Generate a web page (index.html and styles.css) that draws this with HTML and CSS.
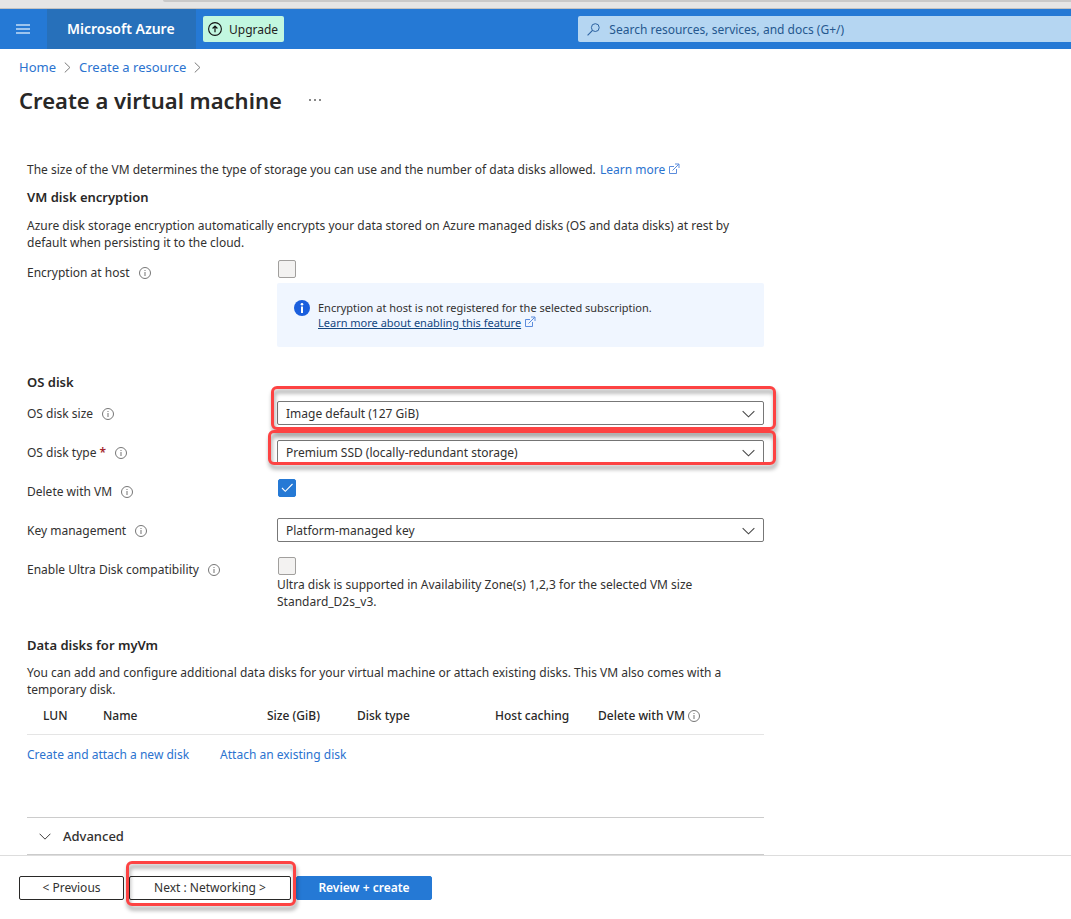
FILE: index.html
```html
<!DOCTYPE html>
<html lang="en">
<head>
<meta charset="utf-8">
<meta name="viewport" content="width=device-width, initial-scale=1">
<title>Create a virtual machine - Microsoft Azure</title>
<link rel="stylesheet" href="styles.css">
</head>
<body>
<svg class="sprite" aria-hidden="true">
  <symbol id="info" viewBox="0 0 12 12"><circle cx="6" cy="6" r="5.5" fill="none" stroke="#767676"/><path d="M6 5v4M6 3v1" stroke="#8a8a8a" stroke-width="1.2"/></symbol>
  <symbol id="chevron" viewBox="0 0 14 8"><path d="M.7 .8L7 7.1L13.3 .8" fill="none" stroke="currentColor" stroke-width="1.1"/></symbol>
  <symbol id="crumb" viewBox="0 0 6 10"><path d="M.5 .5L5.2 5L.5 9.5" fill="none" stroke="currentColor" stroke-width=".9"/></symbol>
  <symbol id="external" viewBox="0 0 12 12"><path d="M6 3.5H1.5V10.500H8.500V6M4.500 7.500L10.800 1.200M7 1H11V5" fill="none" stroke="currentColor"/></symbol>
</svg>

<div class="browser-edge"><div class="browser-bar"></div></div>

<header class="topbar">
  <div class="topbar-left">
    <button class="menu" type="button" aria-label="Show portal menu"><span class="bars"></span></button>
    <a class="brand" href="#">Microsoft Azure</a>
    <button class="upgrade" type="button">
      <svg width="14" height="14" viewBox="0 0 14 14" aria-hidden="true"><circle cx="7" cy="7" r="6.4" fill="none" stroke="#111" stroke-width="1.1"/><path d="M7 10.200V4.200M4.600 6.500L7 4.100L9.400 6.500" fill="none" stroke="#111" stroke-width="1.2"/></svg>
      Upgrade
    </button>
  </div>
  <div class="search">
    <svg width="13" height="13" viewBox="0 0 13 13" aria-hidden="true"><circle cx="8.300" cy="4.600" r="3.900" fill="none" stroke="#2c62a0"/><path d="M5.500 7.400L.6 12.300" stroke="#2c62a0" stroke-width="1.100"/></svg>
    <input type="search" aria-label="Search" placeholder="Search resources, services, and docs (G+/)">
  </div>
</header>

<nav class="breadcrumb" aria-label="Breadcrumb">
  <a href="#">Home</a><svg width="7" height="11" aria-hidden="true"><use href="#crumb"/></svg>
  <a href="#">Create a resource</a><svg width="7" height="11" aria-hidden="true"><use href="#crumb"/></svg>
</nav>

<div class="title-row">
  <h1>Create a virtual machine</h1>
  <button class="more" type="button" aria-label="More actions"><svg width="12" height="2" viewBox="0 0 12 2" aria-hidden="true"><path d="M0 0h2v2H0zM5 0h2v2H5zM10 0h2v2h-2z" fill="#888"/></svg></button>
</div>

<main class="content">
  <p>The size of the VM determines the type of storage you can use and the number of data disks allowed. <a class="learn" href="#">Learn more <svg class="ext" aria-hidden="true"><use href="#external"/></svg></a></p>

  <h2>VM disk encryption</h2>
  <p>Azure disk storage encryption automatically encrypts your data stored on Azure managed disks (OS and data disks) at rest by default when persisting it to the cloud.</p>

  <div class="row encryption">
    <label for="host">Encryption at host <svg class="info" aria-hidden="true"><use href="#info"/></svg></label>
    <div>
      <input class="check" id="host" type="checkbox" disabled>
      <div class="notice">
        <svg width="16" height="16" viewBox="0 0 16 16" aria-hidden="true"><circle cx="8" cy="8" r="8" fill="#1b5fdd"/><path d="M7 6.500h2v6.500H7z" fill="#fff"/><circle cx="8" cy="4.200" r="1.300" fill="#fff"/></svg>
        <div>Encryption at host is not registered for the selected subscription.<br><a href="#">Learn more about enabling this feature</a> <svg class="ext" aria-hidden="true"><use href="#external"/></svg></div>
      </div>
    </div>
  </div>

  <h2 class="section">OS disk</h2>
  <div class="fields">
    <div class="row">
      <label for="size">OS disk size <svg class="info" aria-hidden="true"><use href="#info"/></svg></label>
      <div class="select">
        <select id="size"><option>Image default (127 GiB)</option></select>
        <svg class="arrow" aria-hidden="true"><use href="#chevron"/></svg>
        <span class="callout callout-size"></span>
      </div>
    </div>
    <div class="row">
      <label for="type">OS disk type <span class="required">*</span> <svg class="info" aria-hidden="true"><use href="#info"/></svg></label>
      <div class="select">
        <select id="type"><option>Premium SSD (locally-redundant storage)</option></select>
        <svg class="arrow" aria-hidden="true"><use href="#chevron"/></svg>
        <span class="callout callout-type"></span>
      </div>
    </div>
    <div class="row">
      <label for="delete">Delete with VM <svg class="info" aria-hidden="true"><use href="#info"/></svg></label>
      <div class="check-wrap">
        <input class="check" id="delete" type="checkbox" checked>
        <svg class="tick" viewBox="0 0 18 18" aria-hidden="true"><path d="M4 9L7.300 12.300L14.500 5" fill="none" stroke="#fff" stroke-width="1.100"/></svg>
      </div>
    </div>
    <div class="row">
      <label for="key">Key management <svg class="info" aria-hidden="true"><use href="#info"/></svg></label>
      <div class="select">
        <select id="key"><option>Platform-managed key</option></select>
        <svg class="arrow" aria-hidden="true"><use href="#chevron"/></svg>
      </div>
    </div>
    <div class="row">
      <label for="ultra">Enable Ultra Disk compatibility <svg class="info" aria-hidden="true"><use href="#info"/></svg></label>
      <div>
        <input class="check" id="ultra" type="checkbox" disabled>
        <p class="hint">Ultra disk is supported in Availability Zone(s) 1,2,3 for the selected VM size Standard_D2s_v3.</p>
      </div>
    </div>
  </div>

  <h2 class="section">Data disks for myVm</h2>
  <p>You can add and configure additional data disks for your virtual machine or attach existing disks. This VM also comes with a temporary disk.</p>
  <table>
    <colgroup><col class="c-lun"><col class="c-name"><col class="c-size"><col class="c-type"><col class="c-cache"><col></colgroup>
    <thead>
      <tr><th scope="col">LUN</th><th scope="col">Name</th><th scope="col">Size (GiB)</th><th scope="col">Disk type</th><th scope="col">Host caching</th><th scope="col">Delete with VM <svg class="info" aria-hidden="true"><use href="#info"/></svg></th></tr>
    </thead>
  </table>
  <div class="disk-links"><a href="#">Create and attach a new disk</a><a href="#">Attach an existing disk</a></div>

  <button class="advanced" type="button" aria-expanded="false"><svg width="12" height="7" aria-hidden="true"><use href="#chevron"/></svg>Advanced</button>
</main>

<footer class="actions">
  <button class="btn previous" type="button">&lt; Previous</button>
  <div class="next-wrap">
    <button class="btn next" type="button">Next : Networking &gt;</button>
    <span class="callout callout-next"></span>
  </div>
  <button class="btn primary" type="button">Review + create</button>
</footer>
</body>
</html>
```
FILE: styles.css
```css
* { box-sizing: border-box; }

body {
  margin: 0;
  background: #fff;
  color: #323130;
  font: 12px/17px "Noto Sans", "Open Sans", sans-serif;
}

button, input, select { font: inherit; color: inherit; margin: 0; }
a { color: #2b73cf; text-decoration: none; }
p, h1, h2 { margin: 0; }
h1, h2, th { color: #292827; }
svg { flex: none; }
.sprite { display: none; }

.browser-edge {
  height: 9px;
  padding-left: 163px;
  background: #e5e5e5;
  border-bottom: 1px solid #c2c2c2;
}
.browser-bar { height: 2px; background: #c9c9c9; border-bottom-left-radius: 4px; }

.topbar {
  display: grid;
  grid-template-columns: 54% 1fr;
  align-items: center;
  height: 40px;
  background: #2579d5;
}
.topbar-left { display: flex; align-items: center; height: 40px; }
.menu { width: 47px; height: 40px; padding: 0 16px; border: 0; background: none; }
.bars {
  display: block;
  width: 14px;
  height: 10px;
  border-top: 2px solid #9cc4ee;
  border-bottom: 2px solid #9cc4ee;
  background: linear-gradient(#9cc4ee, #9cc4ee) center / 100% 2px no-repeat;
}
.brand {
  width: 149px;
  padding-left: 20px;
  background: #2770ba;
  color: #fff;
  font-size: 14px;
  font-weight: 600;
  line-height: 40px;
}
.upgrade {
  display: flex;
  align-items: center;
  gap: 7px;
  height: 26px;
  margin-left: 7px;
  padding: 0 6px 0 5px;
  border: 0;
  border-radius: 2px;
  background: #c2f7e0;
  color: #222;
}
.search {
  display: flex;
  align-items: center;
  gap: 9px;
  height: 26px;
  padding-left: 9px;
  border-radius: 2px 0 0 2px;
  background: #b5d6f2;
}
.search input { flex: 1; min-width: 0; padding: 0; border: 0; outline: 0; background: none; }
.search input::placeholder { color: #25588f; opacity: 1; }

.breadcrumb {
  display: flex;
  align-items: center;
  gap: 8px;
  padding: 10px 19px 0;
  color: #777;
  font-size: 13px;
}
.title-row { display: flex; align-items: center; gap: 27px; padding: 9px 19px 0; }
h1 { font-size: 22px; font-weight: 600; line-height: 30px; }
.more { display: flex; padding: 0; border: 0; background: none; }

.content { max-width: 791px; padding: 46px 27px 0; }
h2 { margin: 10px 0 11px; font-size: 13px; font-weight: 600; line-height: 18px; }
.learn { margin-left: 1px; white-space: nowrap; }
.ext { width: 12px; height: 12px; color: #5c8ddd; vertical-align: -1px; }
.info { width: 12px; height: 12px; margin-left: 6px; vertical-align: -2px; }

.row { display: grid; grid-template-columns: 250px 1fr; }
.row label { line-height: 26px; }
.encryption { margin-top: 9px; }
.check {
  appearance: none;
  display: block;
  width: 18px;
  height: 18px;
  margin-left: 1px;
  border: 1px solid #a19f9d;
  border-radius: 2px;
  background: #f3f2f1;
}
.check:checked { border-color: #2579d5; background: #2579d5; }
.check-wrap { position: relative; }
.tick { position: absolute; top: 0; left: 1px; width: 18px; height: 18px; pointer-events: none; }
.notice {
  display: flex;
  gap: 8px;
  min-height: 64px;
  margin-top: 5px;
  padding: 17px;
  border-radius: 2px;
  background: #f0f6ff;
  font-size: 11px;
  line-height: 15px;
}
.notice a { color: #13467f; text-decoration: underline; }
.required { color: #a4262c; font-weight: 600; }

.section { margin: 26px 0 10px; }
.fields { display: grid; gap: 13px; }
.select { position: relative; height: 24px; }
.select select {
  appearance: none;
  display: block;
  width: 100%;
  height: 24px;
  padding: 0 32px 0 8px;
  border: 1px solid #777;
  border-radius: 2px;
  background: #fff;
}
.arrow { position: absolute; top: 9px; right: 9px; width: 13px; height: 8px; color: #444; pointer-events: none; }
.callout {
  position: absolute;
  z-index: 1;
  border: 3px solid #fd4343;
  border-radius: 6px;
  filter: drop-shadow(1px 4px 2px rgb(0 0 0 / 40%));
  pointer-events: none;
}
.callout-size { inset: -15px -12px -5px -6px; }
.callout-type { inset: -10px -12px -1px -9px; }
.hint { margin-top: 1px; }

table { width: 100%; table-layout: fixed; border-collapse: collapse; }
th {
  height: 36px;
  padding: 0 0 0 16px;
  border-bottom: 1px solid #e5e5e5;
  font-weight: 500;
  text-align: left;
  white-space: nowrap;
}
th .info { margin-left: 0; }
.c-lun { width: 60px; }
.c-name { width: 164px; }
.c-size { width: 90px; }
.c-type { width: 138px; }
.c-cache { width: 103px; }
.disk-links { display: flex; gap: 31px; padding-top: 11px; }

.advanced {
  display: flex;
  align-items: center;
  gap: 12px;
  width: 100%;
  height: 38px;
  margin-top: 54px;
  padding: 2px 12px 0;
  border: 1px solid #ccc;
  border-width: 1px 0;
  background: none;
  font-size: 13px;
  font-weight: 500;
}

.actions { display: flex; padding: 20px 19px; border-top: 1px solid #ddd; }
.btn {
  height: 24px;
  padding: 0;
  border: 1px solid #292827;
  border-radius: 2px;
  background: #fff;
}
.previous { width: 105px; }
.next-wrap { position: relative; margin: 0 5px; }
.next { width: 162px; }
.primary { width: 136px; border-color: #2579d5; background: #2579d5; color: #fff; font-weight: 600; }
.callout-next { inset: -15px -5px -6px -3px; }
```
